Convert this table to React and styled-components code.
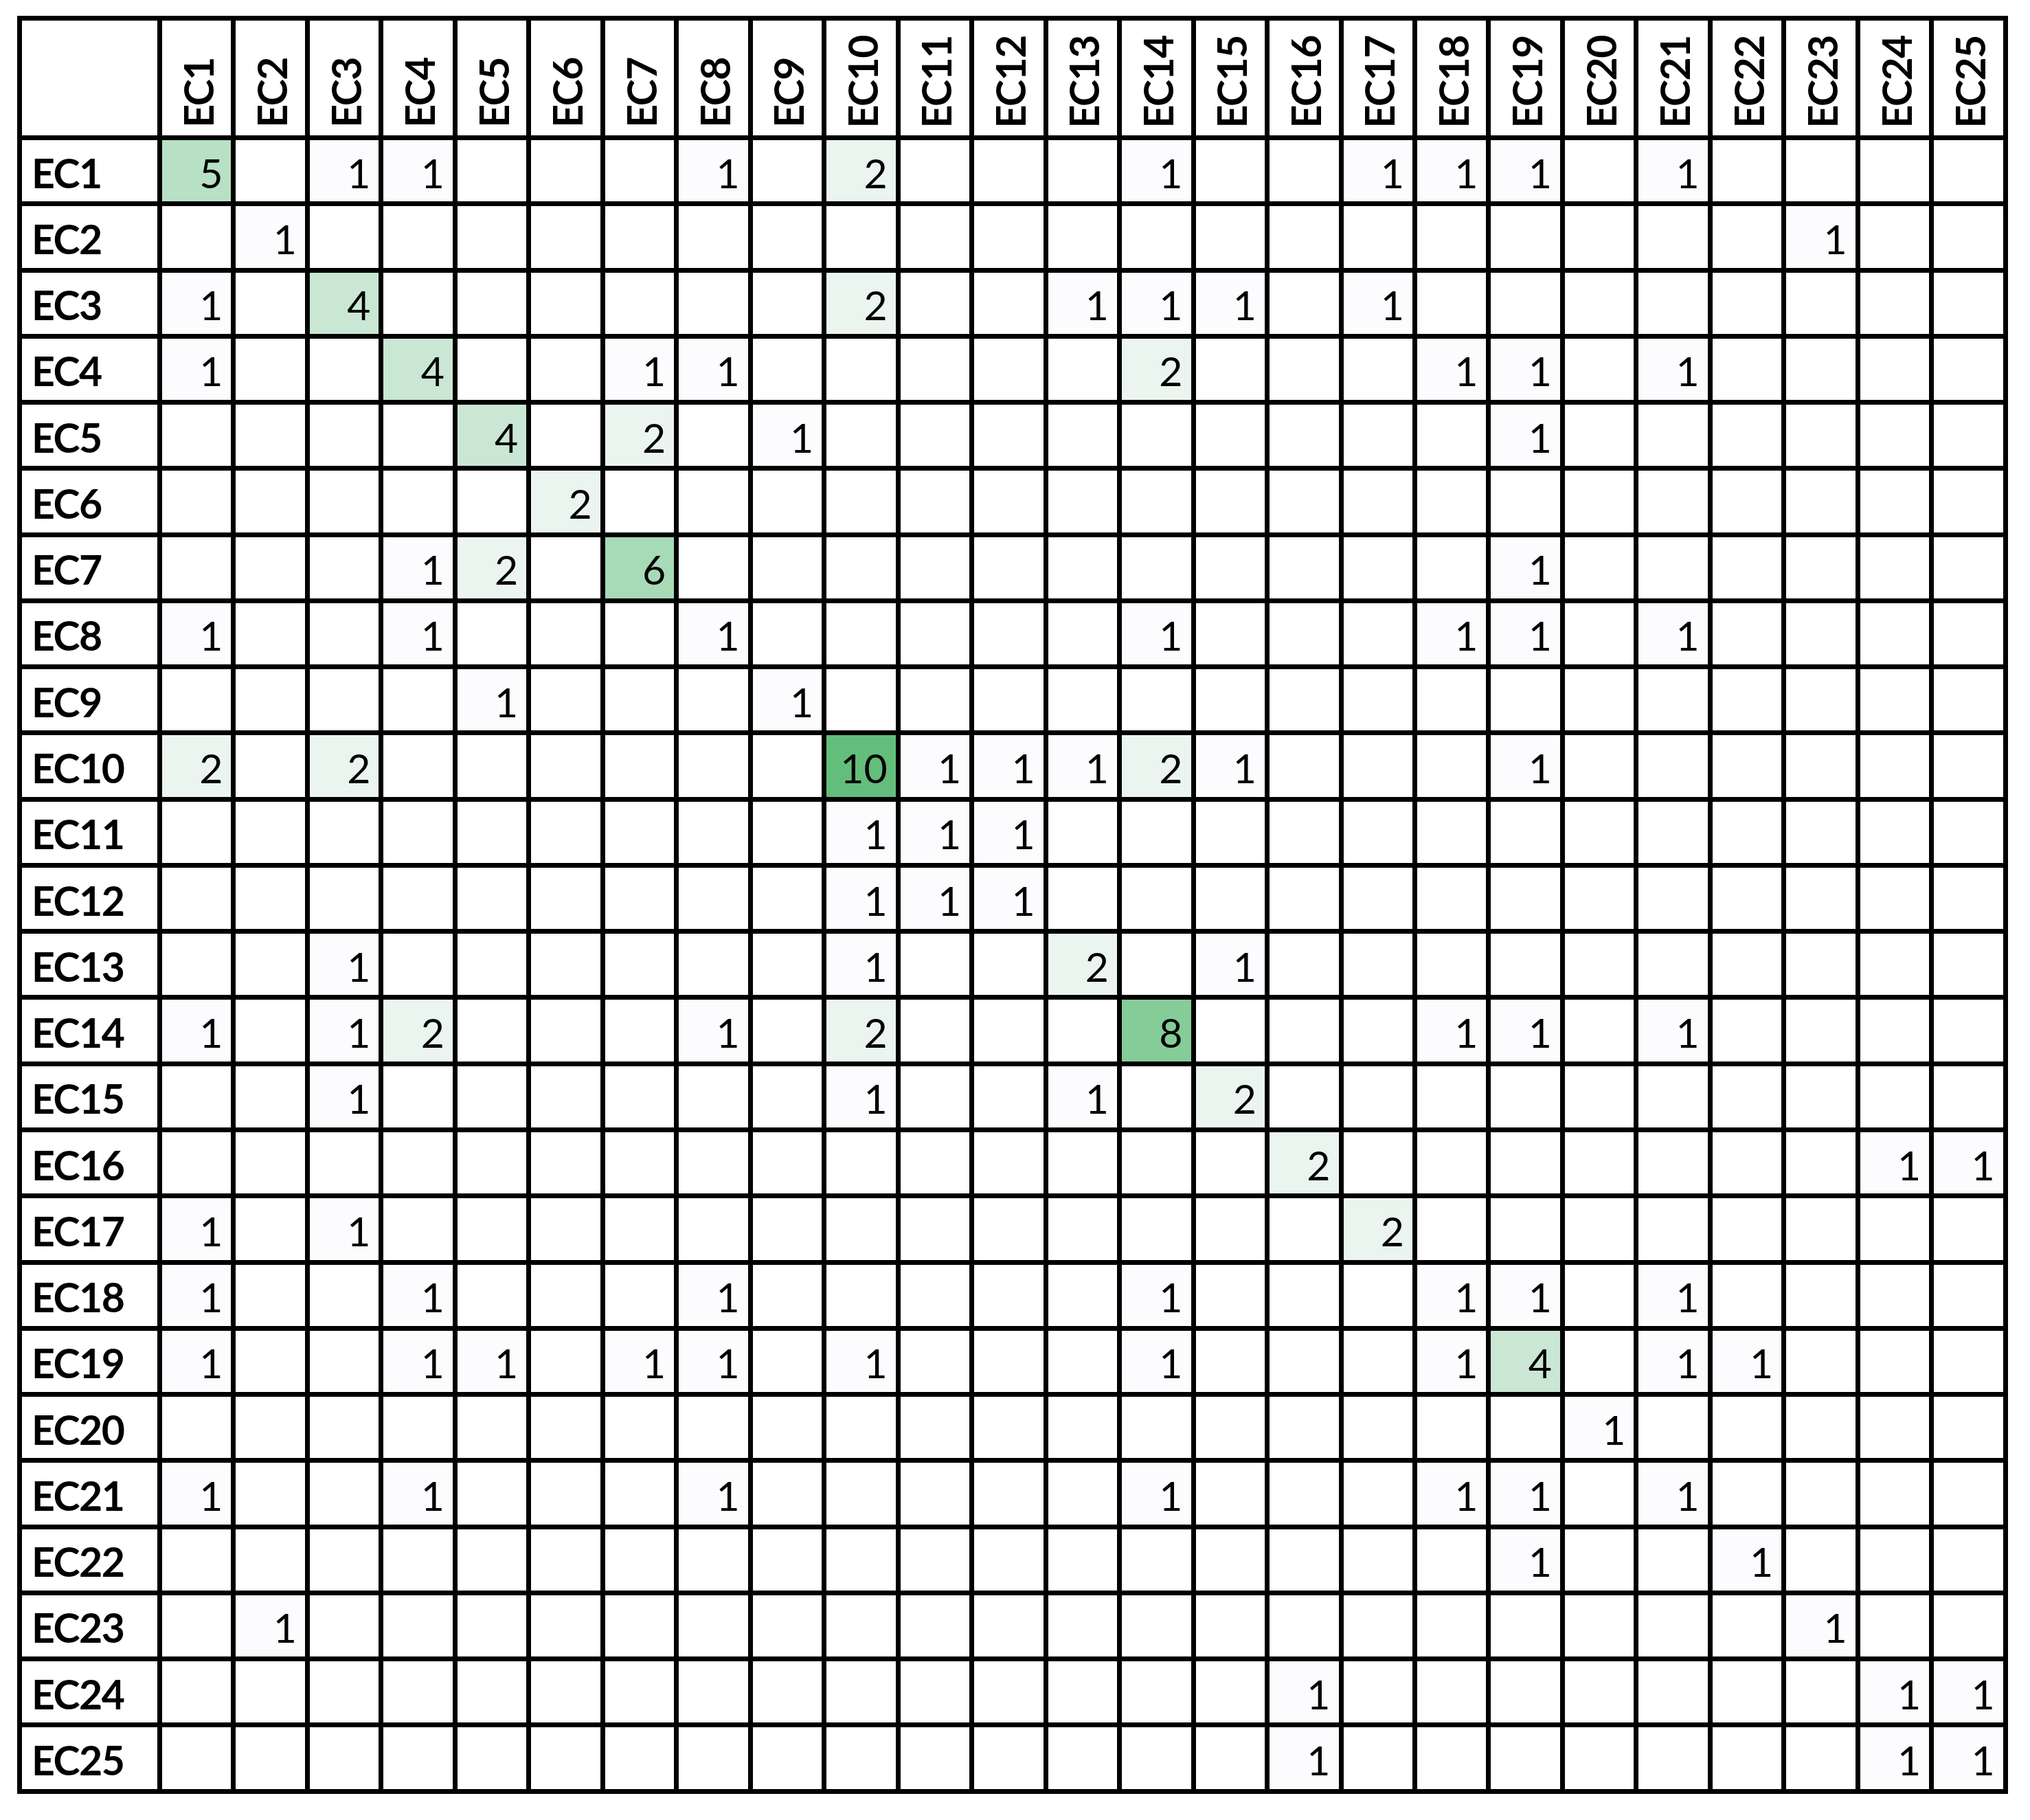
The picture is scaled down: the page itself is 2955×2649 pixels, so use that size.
import React from "react";
import styled, { createGlobalStyle } from "styled-components";

const GlobalStyle = createGlobalStyle`
  html, body {
    margin: 0;
    background: #ffffff;
  }
  body {
    font-family: Lato, "Open Sans", sans-serif;
    color: #000000;
  }
`;

const Page = styled.div`
  padding: 23px 0 0 25px;
`;

const Grid = styled.div`
  display: inline-grid;
  grid-template-columns: 197px repeat(25, 100.48px);
  grid-template-rows: 167px repeat(25, 89.28px);
  gap: 7px;
  padding: 7px;
  background: #000000;
`;

const Corner = styled.div`
  background: #ffffff;
`;

const HeadCell = styled.div`
  background: #ffffff;
  display: flex;
  justify-content: center;
  align-items: flex-end;
  padding: 0 0 11px 4px;
  box-sizing: border-box;
`;

const HeadText = styled.span`
  writing-mode: vertical-rl;
  transform: rotate(180deg);
  font-weight: 700;
  font-size: 59px;
  line-height: 1;
  letter-spacing: -1.5px;
`;

const RowLabel = styled.div`
  background: #ffffff;
  display: flex;
  align-items: center;
  padding: 5px 0 0 14px;
  font-weight: 700;
  font-size: 59px;
  letter-spacing: -1.5px;
`;

const Cell = styled.div`
  background: ${(p) => p.$bg};
  display: flex;
  justify-content: flex-end;
  align-items: center;
  padding: 5px 12px 0 0;
  font-size: 59px;
  font-weight: 400;
`;

// co-occurrence of each pair, symmetric
const links = {
  1: { 1: 5, 3: 1, 4: 1, 8: 1, 10: 2, 14: 1, 17: 1, 18: 1, 19: 1, 21: 1 },
  2: { 2: 1, 23: 1 },
  3: { 1: 1, 3: 4, 10: 2, 13: 1, 14: 1, 15: 1, 17: 1 },
  4: { 1: 1, 4: 4, 7: 1, 8: 1, 14: 2, 18: 1, 19: 1, 21: 1 },
  5: { 5: 4, 7: 2, 9: 1, 19: 1 },
  6: { 6: 2 },
  7: { 4: 1, 5: 2, 7: 6, 19: 1 },
  8: { 1: 1, 4: 1, 8: 1, 14: 1, 18: 1, 19: 1, 21: 1 },
  9: { 5: 1, 9: 1 },
  10: { 1: 2, 3: 2, 10: 10, 11: 1, 12: 1, 13: 1, 14: 2, 15: 1, 19: 1 },
  11: { 10: 1, 11: 1, 12: 1 },
  12: { 10: 1, 11: 1, 12: 1 },
  13: { 3: 1, 10: 1, 13: 2, 15: 1 },
  14: { 1: 1, 3: 1, 4: 2, 8: 1, 10: 2, 14: 8, 18: 1, 19: 1, 21: 1 },
  15: { 3: 1, 10: 1, 13: 1, 15: 2 },
  16: { 16: 2, 24: 1, 25: 1 },
  17: { 1: 1, 3: 1, 17: 2 },
  18: { 1: 1, 4: 1, 8: 1, 14: 1, 18: 1, 19: 1, 21: 1 },
  19: { 1: 1, 4: 1, 5: 1, 7: 1, 8: 1, 10: 1, 14: 1, 18: 1, 19: 4, 21: 1, 22: 1 },
  20: { 20: 1 },
  21: { 1: 1, 4: 1, 8: 1, 14: 1, 18: 1, 19: 1, 21: 1 },
  22: { 19: 1, 22: 1 },
  23: { 2: 1, 23: 1 },
  24: { 16: 1, 24: 1, 25: 1 },
  25: { 16: 1, 24: 1, 25: 1 },
};

const ids = Array.from({ length: 25 }, (_, i) => i + 1);

// excel style two colour scale, 1 -> #FCFCFF, 10 -> #63BE7B
const scale = (v) => {
  if (!v) return "#ffffff";
  const t = (v - 1) / 9;
  const mix = (a, b) => Math.round(a + (b - a) * t);
  return `rgb(${mix(252, 99)}, ${mix(252, 190)}, ${mix(255, 123)})`;
};

export default function App() {
  return (
    <Page>
      <GlobalStyle />
      <Grid>
        <Corner />
        {ids.map((c) => (
          <HeadCell key={"h" + c}>
            <HeadText>EC{c}</HeadText>
          </HeadCell>
        ))}
        {ids.map((r) => (
          <React.Fragment key={"r" + r}>
            <RowLabel>EC{r}</RowLabel>
            {ids.map((c) => {
              const v = links[r][c];
              return (
                <Cell key={c} $bg={scale(v)}>
                  {v || ""}
                </Cell>
              );
            })}
          </React.Fragment>
        ))}
      </Grid>
    </Page>
  );
}
